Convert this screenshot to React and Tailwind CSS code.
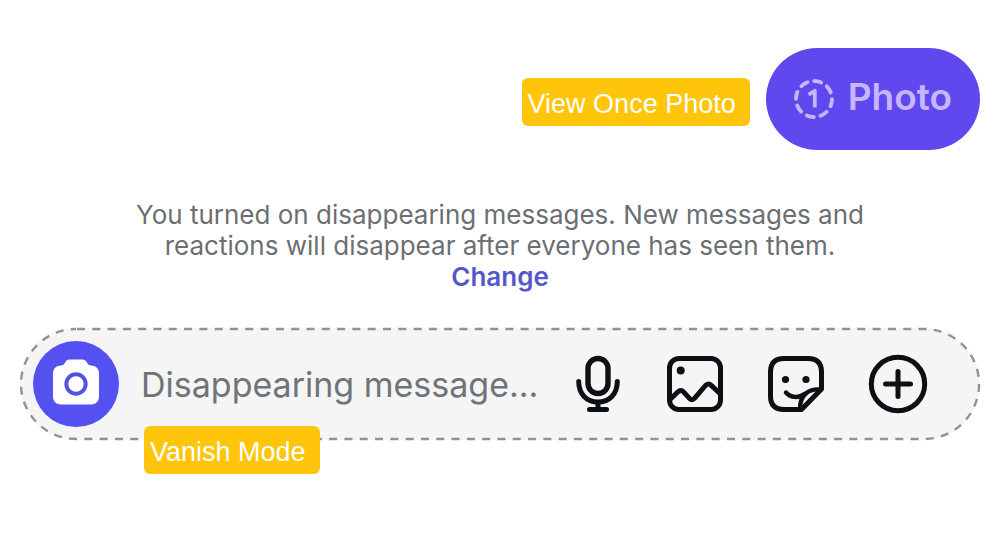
import React from 'react';

function Tag({ children, className = '' }) {
    return (
        <div className={`flex h-12 items-center rounded-md bg-[#fec50b] pl-1.5 pr-3.5 pt-1 font-['Liberation_Sans',sans-serif] text-[27px] leading-8 whitespace-nowrap text-white ${className}`}>
            {children}
        </div>
    );
}

function ViewOnceIcon() {
    return (
        <svg className="mt-1" width="40" height="40" viewBox="0 0 40 40" fill="none" stroke="currentColor" strokeLinecap="round" aria-hidden="true">
            <circle cx="20" cy="20" r="18" strokeWidth="3.8" pathLength="100" strokeDasharray="6.5 6" strokeDashoffset="3.25" transform="rotate(12 20 20)" />
            <path d="M14.5 15.6 20.8 11.8V28.5" strokeWidth="3.8" strokeLinecap="butt" strokeLinejoin="round" />
        </svg>
    );
}

function CameraIcon() {
    return (
        <svg className="overflow-visible" width="48" height="48" viewBox="0 2 48 48" aria-hidden="true">
            <path
                d="M17.5 1.5h13c2 0 3.2.9 4.2 2.6l1 1.7c.7 1.2 1.6 1.7 3 1.7 5.2 0 8.3 3 8.3 8.2v22.6c0 5.2-3.1 8.2-8.3 8.2H9.3C4.1 46.5 1 43.5 1 38.3V15.7C1 10.5 4.1 7.5 9.3 7.5c1.4 0 2.3-.5 3-1.7l1-1.7c1-1.7 2.2-2.6 4.2-2.6z"
                fill="#fff"
            />
            <circle cx="24" cy="26" r="9.7" fill="none" stroke="#5551e0" strokeWidth="3.9" />
        </svg>
    );
}

function MicIcon() {
    return (
        <svg width="60" height="60" viewBox="0 0 60 60" fill="none" stroke="currentColor" strokeWidth="5" strokeLinecap="round" aria-hidden="true">
            <rect x="20" y="4.5" width="20" height="35" rx="10" strokeWidth="5.4" />
            <path d="M10.7 27.5c0 12.5 8 20.5 19.3 20.5s19.3-8 19.3-20.5" />
            <path d="M30 48v8" strokeLinecap="butt" />
            <path d="M21.5 55.5h17" />
        </svg>
    );
}

function GalleryIcon() {
    return (
        <svg className="overflow-visible" width="60" height="60" viewBox="3 0 60 60" fill="none" stroke="currentColor" strokeWidth="5" strokeLinejoin="round" aria-hidden="true">
            <rect x="4.5" y="4.5" width="51" height="51" rx="9.5" />
            <circle cx="15.7" cy="16.5" r="4" fill="currentColor" stroke="none" />
            <path d="M5 45.5l8-7.7c1.900-1.900 3.800-1.900 5.500 0l6 6.600c1.600 1.800 3.300 1.800 5 0L40.500 31.500c1.900-2.100 3.800-2.100 5.700-.2L55.500 40" />
        </svg>
    );
}

function StickerIcon() {
    return (
        <svg className="overflow-visible" width="60" height="60" viewBox="2 0 60 60" fill="none" stroke="currentColor" strokeWidth="5" strokeLinejoin="round" strokeLinecap="round" aria-hidden="true">
            <path d="M33.5 55.5H18C9 55.5 4.500 51 4.500 42V18C4.500 9 9 4.500 18 4.500h24c9 0 13.500 4.500 13.500 13.500v17L35.500 55.500z" />
            <path d="M54.5 35.5C42 34.5 34 41.5 34 54.5" strokeWidth="4.4" />
            <path d="M20 38.5c4.500 5.300 13 6 18.500 1.500" strokeWidth="4.4" />
            <circle cx="19.5" cy="25.5" r="3.6" fill="currentColor" stroke="none" />
            <circle cx="40" cy="25.5" r="3.6" fill="currentColor" stroke="none" />
        </svg>
    );
}

function PlusIcon() {
    return (
        <svg width="60" height="60" viewBox="0 0 60 60" fill="none" stroke="currentColor" strokeWidth="5" strokeLinecap="round" aria-hidden="true">
            <circle cx="30" cy="30" r="26.7" />
            <path d="M30 17.5v25M17.5 30h25" />
        </svg>
    );
}

const actions = [
    { label: 'Voice message', Icon: MicIcon },
    { label: 'Gallery', Icon: GalleryIcon },
    { label: 'Stickers', Icon: StickerIcon },
    { label: 'More', Icon: PlusIcon },
];

export default function App() {
    return (
        <main className="bg-white px-5 py-12 font-[Inter,sans-serif]">
            {/* Sent message */}
            <div className="flex items-start justify-end gap-4">
                <Tag className="mt-[30px]">View Once Photo</Tag>
                <button type="button" className="flex items-center gap-3.5 rounded-full bg-[#5f48ee] px-7 pt-[27px] pb-[31px] text-[37px] leading-[42px] font-semibold text-[#c5b6ff]">
                    <ViewOnceIcon />
                    Photo
                </button>
            </div>

            {/* Notice */}
            <p className="mx-auto mt-[49px] max-w-3xl text-center text-[26px] leading-[31px] text-[#6b6f73]">
                You turned on disappearing messages. New messages and
                <br />
                reactions will disappear after everyone has seen them.
                <br />
                <a href="#change" className="font-semibold text-[#5358c8]">Change</a>
            </p>

            {/* Composer */}
            <form className="relative mt-9 flex h-28 items-center rounded-full bg-[#f5f5f6] px-[13px]" onSubmit={(e) => e.preventDefault()}>
                <svg className="pointer-events-none absolute inset-0 size-full overflow-visible" fill="none" aria-hidden="true">
                    <rect x="1" y="1" width="99.8%" height="98.2%" rx="55" stroke="#929292" strokeWidth="2.4" strokeDasharray="8 7.3" strokeDashoffset="-1" />
                </svg>
                <button type="button" aria-label="Camera" className="flex size-[86px] shrink-0 items-center justify-center rounded-full bg-[#5551f0]">
                    <CameraIcon />
                </button>
                <input
                    type="text"
                    aria-label="Message"
                    placeholder="Disappearing message..."
                    className="ml-[22px] min-w-0 flex-1 bg-transparent pt-0.5 text-[34px] leading-[44px] outline-none placeholder:text-[#6f7478]"
                />
                <div className="flex shrink-0 items-center gap-10 pr-[39px] text-[#0c0f14]">
                    {actions.map(({ label, Icon }) => (
                        <button key={label} type="button" aria-label={label}>
                            <Icon />
                        </button>
                    ))}
                </div>
                <Tag className="absolute top-[98px] left-31">Vanish Mode</Tag>
            </form>
        </main>
    );
}
